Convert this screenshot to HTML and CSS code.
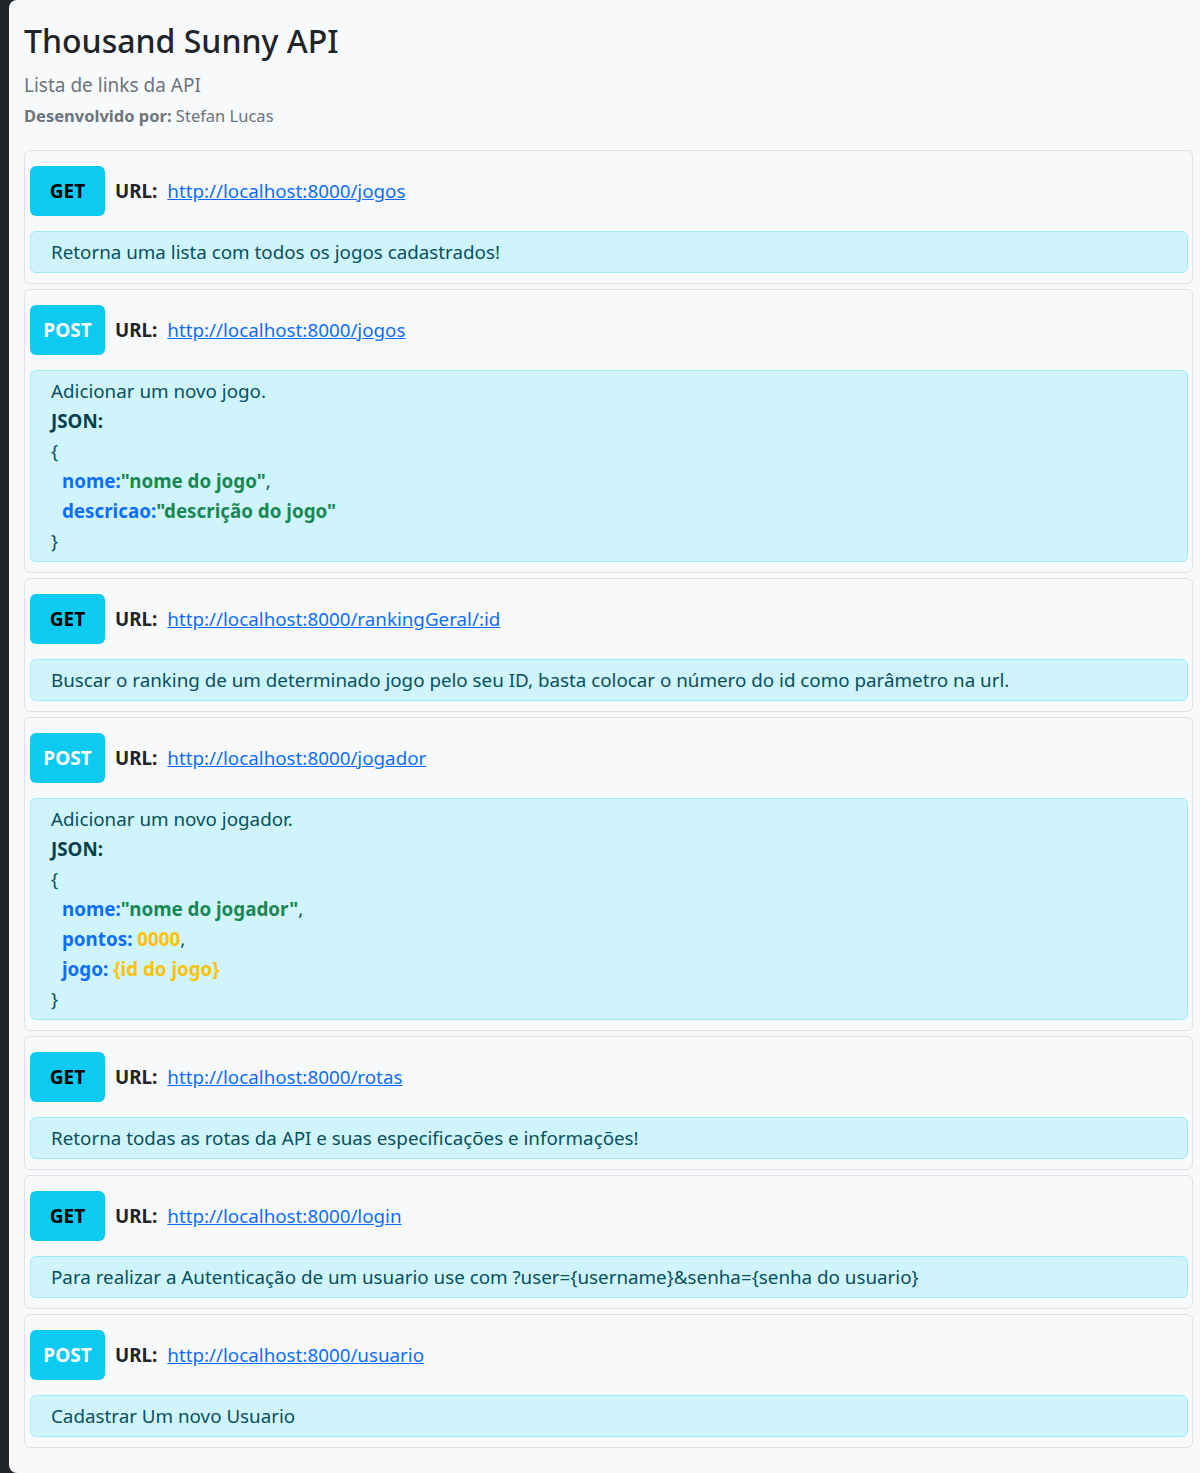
FILE: index.html
```html
<!DOCTYPE html>
<html lang="pt-BR">
<head>
<meta charset="utf-8">
<title>Thousand Sunny API</title>
<link rel="stylesheet" href="styles.css">
</head>
<body>
<main class="page">
  <header class="header">
    <h1 class="title">Thousand Sunny API</h1>
    <p class="subtitle">Lista de links da API</p>
    <p class="author"><strong>Desenvolvido por:</strong> Stefan Lucas</p>
  </header>

  <section class="routes">
    <article class="card">
      <div class="route">
        <span class="method method-get">GET</span>
        <span class="url-label">URL:</span>
        <a class="url" href="http://localhost:8000/jogos">http://localhost:8000/jogos</a>
      </div>
      <div class="alert">Retorna uma lista com todos os jogos cadastrados!</div>
    </article>

    <article class="card">
      <div class="route">
        <span class="method method-post">POST</span>
        <span class="url-label">URL:</span>
        <a class="url" href="http://localhost:8000/jogos">http://localhost:8000/jogos</a>
      </div>
      <div class="alert">
        <div>Adicionar um novo jogo.</div>
        <div class="json-label">JSON:</div>
        <div>{</div>
        <div class="json-line"><span class="key">nome:</span><span class="str">"nome do jogo"</span>,</div>
        <div class="json-line"><span class="key">descricao:</span><span class="str">"descrição do jogo"</span></div>
        <div>}</div>
      </div>
    </article>

    <article class="card">
      <div class="route">
        <span class="method method-get">GET</span>
        <span class="url-label">URL:</span>
        <a class="url" href="http://localhost:8000/rankingGeral/:id">http://localhost:8000/rankingGeral/:id</a>
      </div>
      <div class="alert">Buscar o ranking de um determinado jogo pelo seu ID, basta colocar o número do id como parâmetro na url.</div>
    </article>

    <article class="card">
      <div class="route">
        <span class="method method-post">POST</span>
        <span class="url-label">URL:</span>
        <a class="url" href="http://localhost:8000/jogador">http://localhost:8000/jogador</a>
      </div>
      <div class="alert">
        <div>Adicionar um novo jogador.</div>
        <div class="json-label">JSON:</div>
        <div>{</div>
        <div class="json-line"><span class="key">nome:</span><span class="str">"nome do jogador"</span>,</div>
        <div class="json-line"><span class="key">pontos:</span> <span class="num">0000</span>,</div>
        <div class="json-line"><span class="key">jogo:</span> <span class="num">{id do jogo}</span></div>
        <div>}</div>
      </div>
    </article>

    <article class="card">
      <div class="route">
        <span class="method method-get">GET</span>
        <span class="url-label">URL:</span>
        <a class="url" href="http://localhost:8000/rotas">http://localhost:8000/rotas</a>
      </div>
      <div class="alert">Retorna todas as rotas da API e suas especificações e informações!</div>
    </article>

    <article class="card">
      <div class="route">
        <span class="method method-get">GET</span>
        <span class="url-label">URL:</span>
        <a class="url" href="http://localhost:8000/login">http://localhost:8000/login</a>
      </div>
      <div class="alert">Para realizar a Autenticação de um usuario use com ?user={username}&amp;senha={senha do usuario}</div>
    </article>

    <article class="card">
      <div class="route">
        <span class="method method-post">POST</span>
        <span class="url-label">URL:</span>
        <a class="url" href="http://localhost:8000/usuario">http://localhost:8000/usuario</a>
      </div>
      <div class="alert">Cadastrar Um novo Usuario</div>
    </article>
  </section>
</main>
</body>
</html>
```

FILE: styles.css
```css
* {
  box-sizing: border-box;
}

html, body {
  margin: 0;
  padding: 0;
}

body {
  background: #212529;
  font-family: "Noto Sans", "Open Sans", sans-serif;
  color: #212529;
}

.page {
  margin-left: 9px;
  min-height: 1473px;
  background: #f8f9fa;
  border-radius: 8px 0 0 8px;
  padding: 22px 7px 25px 15px;
}

.header {
  margin-bottom: 22px;
}

.title {
  margin: 0;
  font-size: 32px;
  font-weight: 500;
  line-height: 1.2;
  color: #212529;
}

.subtitle {
  margin: 14px 0 0;
  font-size: 19px;
  line-height: 1.2;
  color: #6c757d;
}

.author {
  margin: 7px 0 0;
  font-size: 16.5px;
  line-height: 24px;
  color: #6c757d;
}

.author strong {
  font-weight: 700;
}

.routes {
  display: flex;
  flex-direction: column;
  gap: 5px;
}

.card {
  border: 1px solid #dee2e6;
  border-radius: 6px;
  padding: 15px 4px 10px 5px;
  font-size: 18.8px;
}

.route {
  display: flex;
  align-items: center;
  height: 50px;
  margin-bottom: 15px;
}

.method {
  display: flex;
  align-items: center;
  justify-content: center;
  width: 75px;
  height: 50px;
  border-radius: 6px;
  background: #0dcaf0;
  font-weight: 700;
  font-size: 19px;
}

.method-get {
  color: #000;
}

.method-post {
  color: #fff;
}

.url-label {
  margin-left: 10px;
  font-weight: 700;
  color: #212529;
}

.url {
  margin-left: 10px;
  color: #0d6efd;
  text-decoration: underline;
}

.alert {
  background: #cff4fc;
  border: 1px solid #9eeaf9;
  border-radius: 6px;
  color: #055160;
  padding: 5px 20px;
  line-height: 30px;
}

.json-label {
  font-weight: 700;
  color: #04414d;
}

.json-line {
  padding-left: 11px;
}

.key {
  color: #0d6efd;
  font-weight: 700;
}

.str {
  color: #198754;
  font-weight: 700;
}

.num {
  color: #ffc107;
  font-weight: 700;
}
```
